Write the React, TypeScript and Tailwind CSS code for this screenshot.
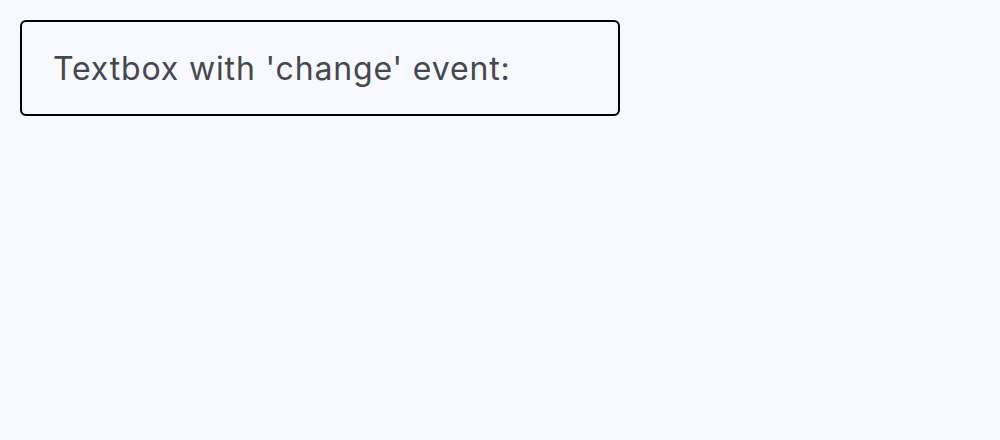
export default function App() {
  return (
    <div className="min-h-screen bg-[#f8f9fe] p-5">
      <input
        type="text"
        placeholder="Textbox with 'change' event:"
        className="block h-[96px] w-[600px] rounded-[6px] border-2 border-black bg-transparent pl-[31px] pr-[32px] text-[32px] tracking-[0.85px] text-[#45484e] outline-none placeholder:text-[#45484e]"
        style={{ fontFamily: "Inter, 'Noto Sans', sans-serif" }}
      />
    </div>
  );
}
